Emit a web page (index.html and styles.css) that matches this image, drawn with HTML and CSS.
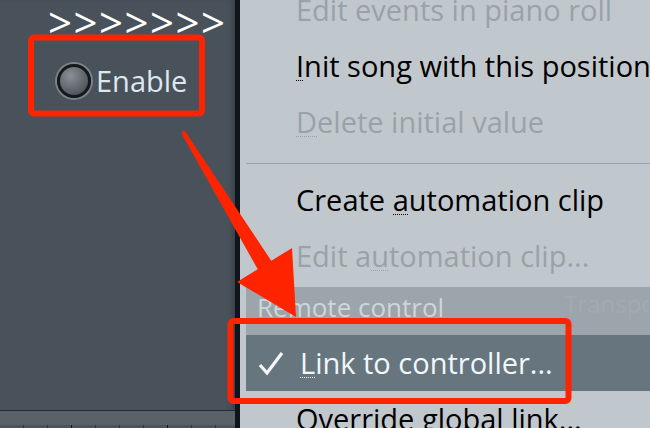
FILE: index.html
```html
<!DOCTYPE html>
<html lang="en">
<head>
<meta charset="utf-8">
<title>Context menu</title>
<link rel="stylesheet" href="styles.css">
</head>
<body>
<div class="screen">
  <aside class="panel">
    <div class="chevrons">&gt;&gt;&gt;&gt;&gt;&gt;&gt;</div>
    <div class="enable"><span class="radio"></span><span class="enable-text">Enable</span></div>
    <div class="panel-fill"></div>
    <div class="panel-strip"></div>
    <div class="panel-ticks"></div>
  </aside>
  <div class="divider"></div>
  <nav class="menu">
    <div class="item disabled">Edit events in piano roll</div>
    <div class="item"><span class="acc">I</span>nit song with this position</div>
    <div class="item disabled"><span class="acc">D</span>elete initial value</div>
    <div class="sep"></div>
    <div class="item">Create <span class="acc">a</span>utomation clip</div>
    <div class="item disabled">Edit a<span class="acc">u</span>tomation clip...</div>
    <div class="header"><span>Remote control</span><span class="ghost">Transpo</span></div>
    <div class="item active"><svg class="check" width="26" height="30" viewBox="0 0 26 30"><path d="M2 17 L9 25 L24 5" fill="none" stroke="#f4f8fb" stroke-width="3.2" stroke-linejoin="miter"/></svg><span class="acc">L</span>ink to controller...</div>
    <div class="item">Override global link...</div>
  </nav>
  <svg class="annotations" width="650" height="428" viewBox="0 0 650 428">
    <rect x="31" y="37.5" width="171" height="76" rx="3" fill="none" stroke="#ff2400" stroke-width="6"/>
    <rect x="230.5" y="321" width="338" height="80" rx="3" fill="none" stroke="#ff2400" stroke-width="6"/>
    <path d="M184.5 130.5 Q182 131 181.5 133.5 L257.7 269.2 L237 282 L296 317 L292 248 L271.3 260.8 Z" fill="#ff2400"/>
  </svg>
</div>
</body>
</html>
```

FILE: styles.css
```css
html, body {
  margin: 0;
  padding: 0;
}
body {
  width: 650px;
  height: 428px;
  overflow: hidden;
  font-family: "Open Sans", "Noto Sans", sans-serif;
}
.screen {
  position: relative;
  display: flex;
  width: 650px;
  height: 428px;
  overflow: hidden;
}
.panel {
  width: 235px;
  flex-shrink: 0;
  display: flex;
  flex-direction: column;
  background: #49525a;
  box-shadow: inset -6px 0 6px -4px rgba(20, 26, 30, 0.35);
}
.chevrons {
  height: 34px;
  padding-top: 5px;
  padding-left: 48px;
  color: #ffffff;
  font-size: 42px;
  line-height: 34px;
  letter-spacing: 1.5px;
  white-space: nowrap;
}
.enable {
  display: flex;
  align-items: center;
  gap: 4px;
  height: 48px;
  padding-left: 57px;
  margin-top: 18px;
}
.radio {
  width: 28px;
  height: 28px;
  border-radius: 50%;
  border: 3px solid #15191c;
  box-shadow: 0 0 0 2px #7b8388;
  background: radial-gradient(circle at 38% 32%, #8a9095 0%, #5f666c 55%, #3d4348 100%);
  flex-shrink: 0;
}
.enable-text {
  color: #dce7ee;
  font-size: 29px;
  line-height: 34px;
  margin-left: 1px;
}
.panel-fill {
  flex: 1;
}
.panel-strip {
  height: 14px;
  border-top: 1px solid #262c31;
  background: #5a6168;
}
.panel-ticks {
  height: 3px;
  background-color: #4d555c;
  background-image:
    repeating-linear-gradient(to right, transparent 0 71px, #111518 71px 72px, transparent 72px 96px),
    repeating-linear-gradient(to right, transparent 0 23px, #2e353a 23px 24px);
}
.divider {
  width: 5px;
  flex-shrink: 0;
  background: #0e161b;
}
.menu {
  flex: 1;
  display: flex;
  flex-direction: column;
  padding-left: 6px;
  margin-top: -18px;
  background: #c1c8cd;
  overflow: hidden;
}
.item {
  flex-shrink: 0;
  height: 56px;
  line-height: 56px;
  padding-left: 50px;
  font-size: 29px;
  color: #000000;
  white-space: nowrap;
}
.item.disabled {
  color: #99a2a8;
}
.acc {
  background-image: linear-gradient(to right, currentColor 50%, transparent 50%);
  background-size: 2px 1px;
  background-repeat: repeat-x;
  background-position: 0 34px;
}
.sep {
  flex-shrink: 0;
  height: 22px;
  box-sizing: border-box;
  border-top: 13px solid transparent;
  background: linear-gradient(#9aa3a9, #9aa3a9) no-repeat 0 0 / 100% 1px;
}
.header {
  flex-shrink: 0;
  height: 48px;
  line-height: 40px;
  margin-top: 3px;
  padding-left: 11px;
  background: #9ba5ab;
  color: #ced6db;
  font-size: 26px;
  white-space: nowrap;
  display: flex;
  align-items: flex-start;
}
.ghost {
  margin-left: 120px;
  color: #a1abb1;
  font-size: 24px;
  line-height: 34px;
}
.item.active {
  background: #66757e;
  color: #f2f7fa;
  padding-left: 12px;
}
.check {
  vertical-align: middle;
  margin-right: 16px;
  margin-top: -6px;
}
.annotations {
  position: absolute;
  left: 0;
  top: 0;
  pointer-events: none;
}
```
